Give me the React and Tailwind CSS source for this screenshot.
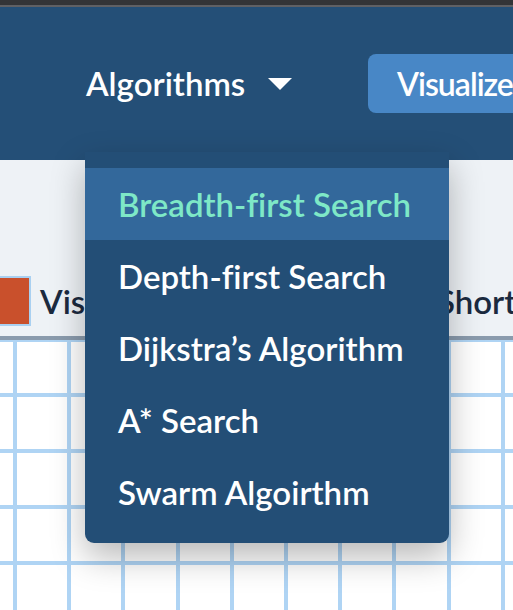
import React from "react";

const items = [
  "Breadth-first Search",
  "Depth-first Search",
  "Dijkstra\u2019s Algorithm",
  "A* Search",
  "Swarm Algoirthm",
];

function GridRow({ first }) {
  return (
    <div className={`flex border-b-4 border-[#afd4f4] ${first ? "h-[55px]" : "h-[56px]"}`}>
      <div className="w-[17px] shrink-0 border-r-4 border-[#afd4f4] bg-white" />
      {Array.from({ length: 10 }).map((_, i) => (
        <div key={i} className="w-[54.2px] shrink-0 border-r-4 border-[#afd4f4] bg-white" />
      ))}
    </div>
  );
}

export default function App() {
  return (
    <div className="relative w-[513px] h-[610px] overflow-hidden bg-white [font-variant-ligatures:none]" style={{ fontFamily: "Lato, 'Open Sans', sans-serif" }}>
      <div className="h-[5px] bg-[#333437]" />
      <div className="h-[2px] bg-[#5f6064]" />
      <nav className="h-[153px] bg-[#244f77] flex items-center pl-[86px]">
        <span className="w-[159px] shrink-0 text-white text-[33px] font-semibold leading-none whitespace-nowrap">Algorithms</span>
        <svg className="ml-[23px] shrink-0" width="24" height="12" viewBox="0 0 24 12">
          <polygon points="0,0 24,0 12,12" fill="white" />
        </svg>
        <div className="ml-[76px] h-[59px] w-[170px] shrink-0 rounded-[8px] bg-[#4887c6] flex items-center pl-[29px]">
          <span className="text-white text-[32px] font-semibold tracking-[-1px] leading-none whitespace-nowrap">Visualize</span>
        </div>
      </nav>
      <div className="h-[176px] bg-[#eef2f6] flex items-end pb-[10px]">
        <div className="flex items-center">
          <div className="w-[33px] h-[50px] -ml-[2px] shrink-0 border-2 border-[#a9d0f1] bg-[#c9502c]" />
          <span className="ml-[9px] w-[397px] shrink-0 text-[33px] font-semibold text-[#1b2a3f] leading-none whitespace-nowrap">Visited Nodes</span>
          <span className="shrink-0 text-[33px] font-semibold text-[#1b2a3f] leading-none whitespace-nowrap">Shortest-path</span>
        </div>
      </div>
      <div className="h-[4px] bg-[#8a9bad]" />
      <div className="h-[2px] bg-[#afd4f4]" />
      <div>
        <GridRow first />
        <GridRow />
        <GridRow />
        <GridRow />
        <GridRow />
      </div>

      <div className="absolute left-[85px] top-[152px] w-[364px] bg-[#234e76] rounded-b-[9px] pt-[16px] pb-[15px] shadow-[0_14px_34px_rgba(0,0,0,0.28)]">
        {items.map((t, i) => (
          <div
            key={t}
            className={`h-[72px] flex items-center pl-[33px] text-[33px] font-semibold leading-none whitespace-nowrap ${
              i === 0 ? "bg-[#33689b] text-[#7ee8c7]" : "text-white"
            }`}
          >
            {t}
          </div>
        ))}
      </div>
    </div>
  );
}
